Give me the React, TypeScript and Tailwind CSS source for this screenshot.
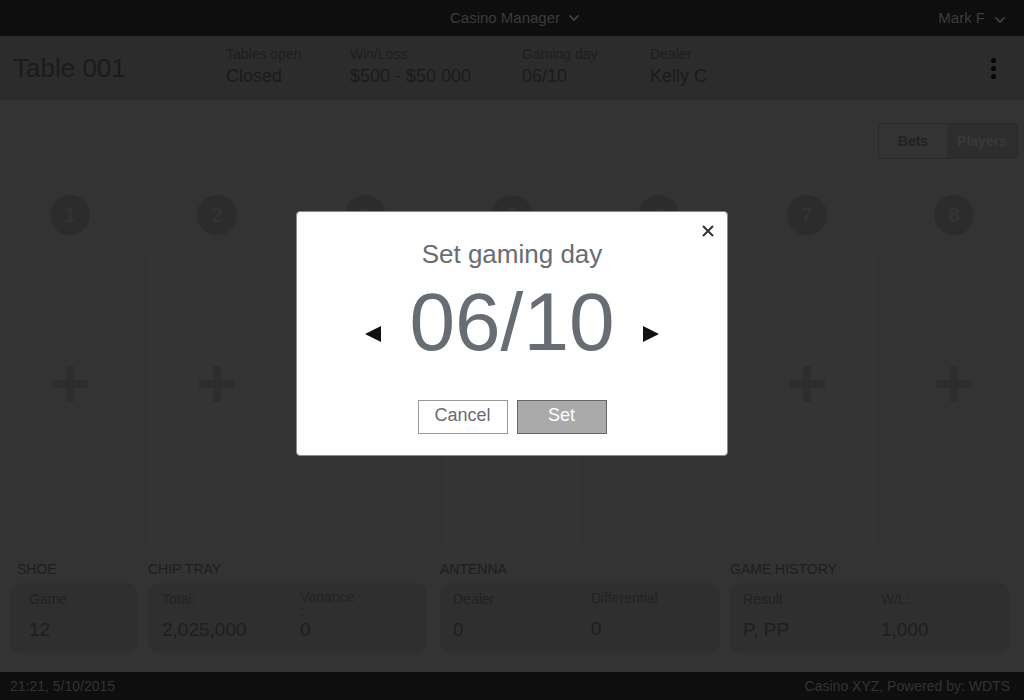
import { ChevronDown } from "lucide-react";

const infoCols = [
  { label: "Tables open", value: "Closed", w: "w-[124px]" },
  { label: "Win/Loss", value: "$500 - $50 000", w: "w-[172px]" },
  { label: "Gaming day", value: "06/10", w: "w-[128px]" },
  { label: "Dealer", value: "Kelly C", w: "w-[120px]" },
];

const seats = ["1", "2", "3", "5", "6", "7", "8"];

function Plus() {
  return (
    <svg width="36" height="36" viewBox="0 0 36 36">
      <rect x="14" y="0" width="8" height="36" fill="#2d2d2d" />
      <rect x="0" y="14" width="36" height="8" fill="#2d2d2d" />
    </svg>
  );
}

function Stat({ label, value, className = "" }: { label: string; value: string; className?: string }) {
  return (
    <div className={`flex flex-col ${className}`}>
      <span className="text-[14px] leading-[18px] h-[29px] text-[#222222]">{label}</span>
      <span className="text-[19px] leading-[22px] text-[#1e1e1e]">{value}</span>
    </div>
  );
}

export default function App() {
  return (
    <div className="relative w-[1024px] h-[700px] overflow-hidden flex flex-col bg-[#333333] font-['Liberation_Sans',Arial,sans-serif]">
      {/* top bar */}
      <div className="h-[36px] bg-[#0e0e0e] flex items-center text-[15px] text-[#3c3c3c] shrink-0">
        <div className="flex-1" />
        <div className="flex items-center gap-[6px] pl-[24px]">
          <span>Casino Manager</span>
          <ChevronDown size={16} strokeWidth={3} />
        </div>
        <div className="flex-1 flex justify-end items-center gap-[7px] pr-[16px]">
          <span>Mark F</span>
          <ChevronDown size={16} strokeWidth={3} className="mt-[3px]" />
        </div>
      </div>

      {/* header */}
      <div className="h-[64px] bg-[#2c2c2c] flex items-center shrink-0">
        <div className="w-[226px] pl-[13px] text-[26px] text-[#1b1b1b]">Table 001</div>
        {infoCols.map((c) => (
          <div key={c.label} className={`${c.w} flex flex-col mt-[-4px]`}>
            <span className="text-[14px] leading-[18px] text-[#1e1e1e]">{c.label}</span>
            <span className="text-[18px] leading-[24px] text-[#1b1b1b] mt-[1px]">{c.value}</span>
          </div>
        ))}
        <div className="flex-1" />
        <div className="pr-[28px] flex flex-col gap-[3px]">
          <span className="w-[5px] h-[5px] rounded-full bg-[#060606]" />
          <span className="w-[5px] h-[5px] rounded-full bg-[#060606]" />
          <span className="w-[5px] h-[5px] rounded-full bg-[#060606]" />
        </div>
      </div>

      {/* content */}
      <div className="flex-1 flex flex-col">
        <div className="flex justify-end pt-[23px] pr-[6px]">
          <div className="flex h-[36px] rounded-[3px] border border-[#2a2a2a] overflow-hidden text-[14px] font-bold">
            <div className="w-[68px] flex items-center justify-center text-[#222]">Bets</div>
            <div className="w-[70px] flex items-center justify-center bg-[#2d2d2d] text-[#393939]">Players</div>
          </div>
        </div>

        <div className="grid grid-cols-7 gap-2 mt-[36px] h-[355px]">
          {seats.map((s, i) => (
            <div key={s} className="flex flex-col items-center">
              <div className="w-[40px] h-[40px] rounded-full bg-[#2c2c2c] flex items-center justify-center text-[20px] font-bold text-[#333333]">
                {s}
              </div>
              <div
                className={`mt-[15px] w-full flex-1 flex justify-center pt-[116px] ${
                  i % 2 === 1 ? "bg-[#343434] border-x border-[#323232]" : "bg-[#333333]"
                }`}
              >
                <Plus />
              </div>
            </div>
          ))}
        </div>

        {/* bottom panels */}
        <div className="flex mt-[10px] text-[#1e1e1e]">
          <div className="ml-[10px] w-[128px] flex flex-col">
            <span className="pl-[7px] text-[14px] leading-[18px] uppercase">Shoe</span>
            <div className="mt-[5px] h-[70px] rounded-[12px] bg-[#2f2f2f] pl-[19px] pt-[7px]">
              <Stat label="Game" value="12" />
            </div>
          </div>
          <div className="ml-[10px] w-[279px] flex flex-col">
            <span className="text-[14px] leading-[18px] uppercase">Chip tray</span>
            <div className="mt-[5px] h-[70px] rounded-[12px] bg-[#2f2f2f] pl-[14px] pt-[7px] flex">
              <Stat label="Total:" value="2,025,000" className="w-[138px]" />
              <div className="flex flex-col mt-[-2px]">
                <span className="text-[14px] leading-[10px] pt-[4px] h-[31px] text-[#222222]">
                  Variance
                  <span className="block mt-[4px]">:</span>
                </span>
                <span className="text-[19px] leading-[22px] text-[#1e1e1e]">0</span>
              </div>
            </div>
          </div>
          <div className="ml-[13px] w-[280px] flex flex-col">
            <span className="text-[14px] leading-[18px] uppercase">Antenna</span>
            <div className="mt-[5px] h-[70px] rounded-[12px] bg-[#2f2f2f] pl-[13px] pt-[7px] flex">
              <Stat label="Dealer" value="0" className="w-[138px]" />
              <Stat label="Differential" value="0" className="mt-[-1px]" />
            </div>
          </div>
          <div className="ml-[10px] w-[280px] flex flex-col">
            <span className="text-[14px] leading-[18px] uppercase">Game history</span>
            <div className="mt-[5px] h-[70px] rounded-[12px] bg-[#2f2f2f] pl-[13px] pt-[7px] flex">
              <Stat label="Result" value="P, PP" className="w-[138px]" />
              <Stat label="W/L:" value="1,000" />
            </div>
          </div>
        </div>
      </div>

      {/* footer */}
      <div className="h-[28px] bg-[#0e0e0e] flex items-center justify-between px-[10px] text-[14px] text-[#333333] shrink-0">
        <span>21:21, 5/10/2015</span>
        <span className="pr-[4px]">Casino XYZ, Powered by: WDTS</span>
      </div>

      {/* modal */}
      <div className="absolute left-[296px] top-[211px] w-[432px] h-[245px] bg-white rounded-[4px] border border-[#8a8a8a] flex flex-col items-center">
        <button className="absolute right-[12px] top-[12px] w-[14px] h-[14px]">
          <svg width="14" height="14" viewBox="0 0 14 14">
            <path d="M2 2 L12 12 M12 2 L2 12" stroke="#333" strokeWidth="2" />
          </svg>
        </button>
        <div className="mt-[27px] text-[26px] leading-[30px] text-[#686c73]">Set gaming day</div>
        <div className="flex items-center mt-[8px]">
          <svg width="16" height="16" viewBox="0 0 16 16" className="mt-[24px]">
            <polygon points="16,0 16,16 0,8" fill="#111" />
          </svg>
          <span className="mx-[28px] text-[82px] leading-[90px] text-[#686c73]">06/10</span>
          <svg width="16" height="16" viewBox="0 0 16 16" className="mt-[24px]">
            <polygon points="0,0 0,16 16,8" fill="#111" />
          </svg>
        </div>
        <div className="flex gap-[9px] mt-[33px]">
          <button className="w-[90px] h-[34px] border border-[#9a9a9a] bg-white text-[18px] leading-[28px] text-[#686c73] pb-[4px]">
            Cancel
          </button>
          <button className="w-[90px] h-[34px] border border-[#666] bg-[#aaaaaa] text-[18px] leading-[28px] text-white pb-[4px]">
            Set
          </button>
        </div>
      </div>
    </div>
  );
}
